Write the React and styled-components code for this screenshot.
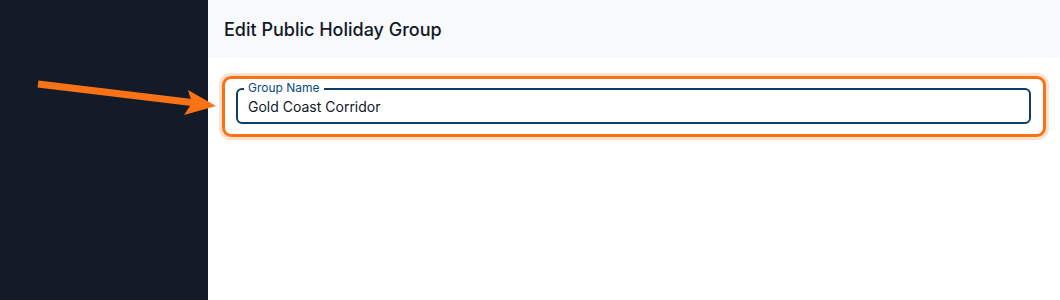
import styled, { createGlobalStyle } from "styled-components";

const GlobalStyle = createGlobalStyle`
  html, body {
    margin: 0;
    padding: 0;
    background: #ffffff;
    font-family: Inter, "Noto Sans", sans-serif;
  }
`;

const Shell = styled.div`
  position: relative;
  display: flex;
  width: 1060px;
  height: 300px;
  overflow: hidden;
`;

const Sidebar = styled.aside`
  width: 208px;
  flex-shrink: 0;
  background: #141b28;
`;

const Main = styled.main`
  flex: 1;
  display: flex;
  flex-direction: column;
  background: #ffffff;
`;

const Header = styled.header`
  height: 58px;
  display: flex;
  align-items: center;
  padding: 0 16px;
  background: #f8f9fb;
`;

const Title = styled.h1`
  margin: 0;
  font-size: 18px;
  font-weight: 500;
  color: #111827;
  letter-spacing: 0;
`;

const Content = styled.div`
  padding: 18px 14px;
`;

const Highlight = styled.div`
  border: 3px solid #f97316;
  border-radius: 9px;
  box-shadow: 0 0 0 3px rgba(249, 115, 22, 0.22);
  padding: 9px 12px 10px 11px;
`;

const Field = styled.div`
  position: relative;
  height: 36px;
  box-sizing: border-box;
  border: 2px solid #0d3c66;
  border-radius: 6px;
  display: flex;
  align-items: center;
  padding: 0 10px;
`;

const Label = styled.label`
  position: absolute;
  top: -9px;
  left: 6px;
  padding: 0 4px;
  background: #ffffff;
  font-size: 12px;
  line-height: 14px;
  color: #0b4a80;
`;

const Value = styled.span`
  font-size: 14px;
  color: #111827;
  padding-top: 1px;
`;

const Arrow = styled.svg`
  position: absolute;
  left: 0;
  top: 0;
  pointer-events: none;
`;

export default function App() {
  return (
    <>
      <GlobalStyle />
      <Shell>
        <Sidebar />
        <Main>
          <Header>
            <Title>Edit Public Holiday Group</Title>
          </Header>
          <Content>
            <Highlight>
              <Field>
                <Label>Group Name</Label>
                <Value>Gold Coast Corridor</Value>
              </Field>
            </Highlight>
          </Content>
        </Main>
        <Arrow width="1060" height="300" viewBox="0 0 1060 300">
          <line x1="38" y1="84" x2="196" y2="103" stroke="#f97316" strokeWidth="7" />
          <polygon points="188,90 216,106 184,115 192,103" fill="#f97316" />
        </Arrow>
      </Shell>
    </>
  );
}
